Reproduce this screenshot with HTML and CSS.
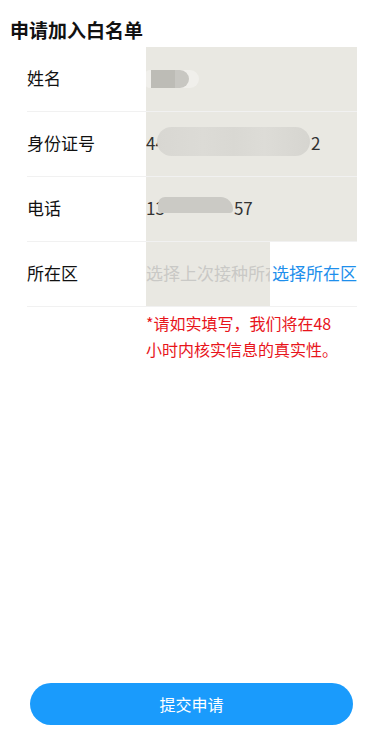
FILE: index.html
```html
<!DOCTYPE html>
<html lang="zh">
<head>
<meta charset="utf-8">
<title>申请加入白名单</title>
<link rel="stylesheet" href="styles.css">
</head>
<body>
<div class="page">
  <h1 class="title">申请加入白名单</h1>
  <div class="form">
    <div class="row">
      <div class="label">姓名</div>
      <div class="value">
        <span class="mask mask-name"><i></i><i></i><i></i></span>
      </div>
    </div>
    <div class="row">
      <div class="label">身份证号</div>
      <div class="value">
        <span class="txt">44</span><span class="gap gap-id"></span><span class="txt">2</span>
        <span class="mask mask-id"></span>
      </div>
    </div>
    <div class="row">
      <div class="label">电话</div>
      <div class="value">
        <span class="txt">13</span><span class="gap gap-tel"></span><span class="txt">57</span>
        <span class="mask mask-tel"></span>
      </div>
    </div>
    <div class="row">
      <div class="label">所在区</div>
      <div class="value value-short">
        <span class="placeholder">选择上次接种所在区</span>
      </div>
      <div class="link">选择所在区</div>
    </div>
  </div>
  <p class="note">*请如实填写，我们将在48小时内核实信息的真实性。</p>
  <button class="submit">提交申请</button>
</div>
</body>
</html>
```
FILE: styles.css
```css
* { box-sizing: border-box; }
html, body {
  margin: 0;
  padding: 0;
  background: #ffffff;
  font-family: "Noto Sans CJK SC", "Noto Sans", sans-serif;
}
.page {
  min-height: 731px;
  display: flex;
  flex-direction: column;
}
.title {
  margin: 0;
  padding: 13px 0 0 10px;
  font-size: 19px;
  line-height: 34px;
  font-weight: bold;
  color: #111111;
}
.form {
  margin: 0 16px 0 27px;
}
.row {
  display: flex;
  height: 65px;
  border-bottom: 1px solid #f1f1f1;
  align-items: stretch;
}
.label {
  width: 119px;
  flex: none;
  display: flex;
  align-items: center;
  padding-bottom: 3px;
  font-size: 17px;
  color: #111111;
}
.value {
  flex: 1;
  position: relative;
  background: #e9e8e2;
  display: flex;
  align-items: center;
  padding-bottom: 3px;
  font-size: 17px;
  color: #333333;
  overflow: hidden;
  white-space: nowrap;
}
.value-short {
  flex: none;
  width: 124px;
}
.placeholder {
  display: block;
  width: 100%;
  overflow: hidden;
  color: #c9c9c6;
}
.link {
  flex: 1;
  display: flex;
  align-items: center;
  justify-content: flex-end;
  padding-bottom: 3px;
  font-size: 17px;
  color: #1e8fec;
  white-space: nowrap;
}
.gap-id { display: inline-block; width: 146px; }
.gap-tel { display: inline-block; width: 69px; }
.mask {
  position: absolute;
  border-radius: 12px;
}
.mask-name {
  left: -4px;
  top: 23px;
  width: 57px;
  height: 18px;
  border-radius: 9px;
  background: #f0efeb;
  display: flex;
  padding-left: 9px;
}
.mask-name i {
  display: block;
  width: 12px;
  height: 18px;
  background: #bdbcb6;
}
.mask-name i:nth-child(3) { background: #c8c7c2; border-radius: 0 9px 9px 0; width: 14px; }
.mask-id {
  left: 11px;
  top: 15px;
  width: 153px;
  height: 29px;
  border-radius: 15px;
  background: linear-gradient(90deg, #d8d7d2 0%, #dcdbd6 30%, #d9d8d3 50%, #dddcd7 70%, #d6d5d0 100%);
}
.mask-tel {
  left: 12px;
  top: 20px;
  width: 75px;
  height: 16px;
  border-radius: 8px 14px 4px 4px;
  background: #cbcac5;
}
.note {
  margin: 3px 0 0 146px;
  font-size: 16px;
  line-height: 26px;
  color: #e8141b;
  width: 200px;
}
.submit {
  margin: auto 20px 6px 30px;
  height: 42px;
  border: none;
  border-radius: 21px;
  background: #1a9bfc;
  color: #ffffff;
  font-family: "Noto Sans CJK SC", "Noto Sans", sans-serif;
  font-size: 16px;
  padding: 0;
}
```
